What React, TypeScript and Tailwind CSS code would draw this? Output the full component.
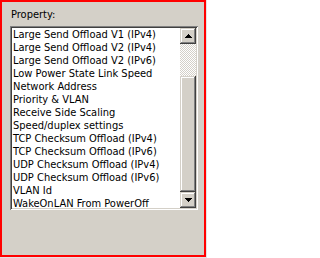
import React from "react";

const items = [
  "Large Send Offload V1 (IPv4)",
  "Large Send Offload V2 (IPv4)",
  "Large Send Offload V2 (IPv6)",
  "Low Power State Link Speed",
  "Network Address",
  "Priority & VLAN",
  "Receive Side Scaling",
  "Speed/duplex settings",
  "TCP Checksum Offload (IPv4)",
  "TCP Checksum Offload (IPv6)",
  "UDP Checksum Offload (IPv4)",
  "UDP Checksum Offload (IPv6)",
  "VLAN Id",
  "WakeOnLAN From PowerOff",
];

const raised =
  "bg-[#d4d0c8] shadow-[inset_-1px_-1px_#404040,inset_1px_1px_#d4d0c8,inset_-2px_-2px_#808080,inset_2px_2px_#fff]";

function Arrow({ down }: { down?: boolean }) {
  return (
    <svg width="7" height="4" viewBox="0 0 7 4" shapeRendering="crispEdges">
      <polygon
        points={down ? "0,0 7,0 3.5,4" : "3.5,0 7,4 0,4"}
        fill="#000"
      />
    </svg>
  );
}

export default function App() {
  return (
    <div className="w-[207px] h-[258px] bg-[#e4e4e4] font-['DejaVu_Sans_Condensed','Liberation_Sans',Arial,sans-serif] text-[11px] text-black">
      <div className="w-[206px] h-[257px] border-2 border-[#ff0000] bg-[#d4d0c8] pt-[6px] pl-[8px] flex flex-col">
        <div className="pl-[1px] leading-[13px] h-[13px]">Property:</div>

        {/* listbox */}
        <div className="mt-[5px] w-[188px] h-[184px] p-[2px] bg-white shadow-[inset_1px_1px_#808080,inset_-1px_-1px_#fff,inset_2px_2px_#404040,inset_-2px_-2px_#d4d0c8] flex">
          <div className="flex-1 overflow-hidden pl-[1px]">
            {items.map((item) => (
              <div key={item} className="h-[13px] leading-[13px] whitespace-nowrap">
                {item}
              </div>
            ))}
          </div>

          {/* scrollbar */}
          <div className="w-[16px] flex flex-col">
            <div className={`h-[16px] flex items-center justify-center ${raised}`}>
              <Arrow />
            </div>
            <div className="h-[32px] bg-[image:repeating-conic-gradient(#fff_0_25%,#d4d0c8_0_50%)] bg-[length:2px_2px]" />
            <div className={`flex-1 ${raised}`} />
            <div className={`h-[16px] flex items-center justify-center ${raised}`}>
              <Arrow down />
            </div>
          </div>
        </div>
      </div>
    </div>
  );
}
